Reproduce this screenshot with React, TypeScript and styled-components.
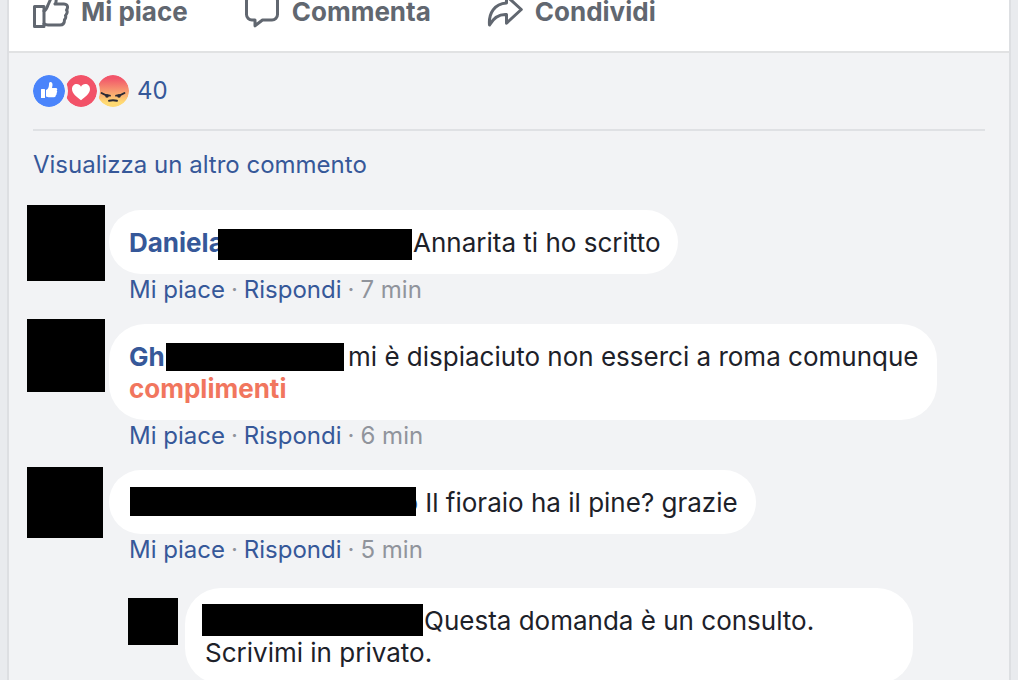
import React from "react";
import styled, { createGlobalStyle } from "styled-components";

const GlobalStyle = createGlobalStyle`
  *, *::before, *::after { box-sizing: border-box; }
  html { scrollbar-width: none; }
  body {
    margin: 0;
    background: #e9ebee;
    color: #1d2129;
    font-family: Inter, "Liberation Sans", sans-serif;
    font-size: 26px;
    line-height: 32px;
  }
`;

const Card = styled.article`
  margin: -20px 7px 0;
  border: 2px solid #dddfe2;
  border-top: 0;
  border-bottom: 0;
  background: #f2f3f5;
`;

const ActionBar = styled.div`
  display: flex;
  gap: 56px;
  padding: 16px 24px 23px;
  background: #fff;
  border-bottom: 2px solid #e1e2e3;
`;

const ActionButton = styled.button`
  display: flex;
  align-items: center;
  gap: 12px;
  height: 32px;
  padding: 0;
  border: 0;
  background: none;
  color: #616770;
  font: inherit;
  font-weight: 700;
  white-space: nowrap;
  cursor: pointer;
`;

const ActionIcon = styled.svg`
  flex: none;
  width: 36px;
  height: 36px;
  fill: none;
  stroke: #616770;
  stroke-width: 3;
  stroke-linejoin: round;
  stroke-linecap: round;
`;

const Feedback = styled.section`
  padding: 0 24px 24px;
`;

const Reactions = styled.div`
  display: flex;
  align-items: center;
  padding: 22px 0;
  border-bottom: 2px solid #dfe1e4;
`;

const Reaction = styled.svg<{ $layer: number }>`
  flex: none;
  width: 32px;
  height: 32px;
  border-radius: 50%;
  box-shadow: 0 0 0 3px #f2f3f5;
  position: relative;
  z-index: ${(p) => p.$layer};
`;

const TextLink = styled.a`
  color: #365899;
  font-size: 24px;
  text-decoration: none;
`;

const ReactionCount = styled(TextLink)`
  margin-left: 8px;
`;

const MoreRow = styled.div`
  display: flex;
  padding: 18px 0 24px;
`;

const CommentList = styled.ul`
  display: flex;
  flex-direction: column;
  gap: 13px;
  margin: 0 48px 0 -6px;
  padding: 0;
  list-style: none;
`;

const CommentItem = styled.li<{ $reply?: boolean }>`
  display: flex;
  align-items: flex-start;
  margin: ${(p) => (p.$reply ? "4px 24px 0 101px" : "0")};
`;

const AvatarColumn = styled.div<{ $reply?: boolean }>`
  flex: none;
  width: ${(p) => (p.$reply ? 57 : 82)}px;
`;

const Avatar = styled.div<{ $width: number; $height: number; $drop?: number }>`
  width: ${(p) => p.$width}px;
  height: ${(p) => p.$height}px;
  margin-top: ${(p) => p.$drop ?? 0}px;
  background: #000;
`;

const CommentBody = styled.div`
  display: flex;
  flex-direction: column;
  align-items: flex-start;
  min-width: 0;
  padding-top: 5px;
`;

const Bubble = styled.p`
  margin: 0;
  padding: 17px 18px 15px 20px;
  border-radius: 36px;
  background: #fff;
`;

const Author = styled.a<{ $width?: number; $tuck?: number }>`
  display: inline-block;
  width: ${(p) => (p.$width ? `${p.$width}px` : "auto")};
  margin-left: ${(p) => -(p.$tuck ?? 0)}px;
  color: #365899;
  font-weight: 700;
  text-decoration: none;
  white-space: nowrap;
`;

const Redaction = styled.span<{
  $width: number;
  $height: number;
  $top?: number;
  $left?: number;
  $right?: number;
}>`
  display: inline-block;
  position: relative;
  z-index: 1;
  vertical-align: top;
  width: ${(p) => p.$width}px;
  height: ${(p) => p.$height}px;
  margin: ${(p) => p.$top ?? 0}px ${(p) => p.$right ?? 0}px
    ${(p) => 32 - p.$height - (p.$top ?? 0)}px ${(p) => p.$left ?? 0}px;
  background: #000;
`;

const Highlight = styled.strong`
  color: #f1765e;
  font-weight: 700;
`;

const Meta = styled.div`
  display: flex;
  gap: 6px;
  padding-left: 20px;
  color: #90949c;
  font-size: 24px;
`;

const MetaButton = styled.button`
  padding: 0;
  border: 0;
  background: none;
  color: #365899;
  font: inherit;
  cursor: pointer;
`;

function CommentMeta({ time }: { time: string }) {
  return (
    <Meta>
      <MetaButton type="button">Mi piace</MetaButton>
      <span>·</span>
      <MetaButton type="button">Rispondi</MetaButton>
      <span>·</span>
      <time>{time}</time>
    </Meta>
  );
}

export default function App() {
  return (
    <>
      <GlobalStyle />
      <Card>
        <ActionBar>
          <ActionButton type="button">
            <ActionIcon viewBox="0 0 36 36" aria-hidden="true">
              <path d="M1.500 12.500h9.500v20h-9.500z" />
              <path d="M11 17c2-1 3-3 4-6l2.500-5.500c.8-2 1-4 3-4 3 0 3 4 2.300 7.500L22 10h9c2.500 0 3.700 1.600 3.500 3.500-.1 1-.5 1.800-1 2.500.8 1 .9 2.500 0 4-.3.700-.5 1-1 1.500.5 1.500.3 3-1 4.200C31.500 29 30 31 27 31H15c-2 0-3-.5-4-1.200" />
            </ActionIcon>
            Mi piace
          </ActionButton>
          <ActionButton type="button">
            <ActionIcon viewBox="0 0 36 36" aria-hidden="true">
              <path d="M8 1.500h20a5.500 5.500 0 0 1 5.500 5.500v13.500a5.500 5.500 0 0 1-5.500 5.500h-9.500L11 31.800V26H8a5.500 5.500 0 0 1-5.500-5.500V7A5.500 5.500 0 0 1 8 1.500z" />
            </ActionIcon>
            Commenta
          </ActionButton>
          <ActionButton type="button">
            <ActionIcon viewBox="0 0 36 36" aria-hidden="true">
              <path d="M19.500 2 34.300 15.500 19.500 29.200V20.500C12 20 7 23 2.500 31 1.500 19 7.500 9.800 19.500 9z" />
            </ActionIcon>
            Condividi
          </ActionButton>
        </ActionBar>

        <Feedback>
          <Reactions>
            <Reaction $layer={3} viewBox="0 0 32 32" aria-label="Mi piace">
              <circle cx="16" cy="16" r="16" fill="#4a84fb" />
              <rect x="8" y="14" width="4" height="9" rx=".6" fill="#fff" />
              <path
                fill="#fff"
                d="M13 15c2-.8 3-3 3-5.500C16 8 16.300 7 17.300 7c1.900 0 2.300 1.500 2.200 3.300L19 13h3.800c1.700 0 1.900 1.700.9 2.500.8.800.7 1.900-.2 2.400.5.900.2 1.800-.7 2.200.3 1.300-.6 2.200-1.800 2.200h-4.500c-1.500 0-2.500-.3-3.500-.8z"
              />
            </Reaction>
            <Reaction $layer={2} viewBox="0 0 32 32" aria-label="Love">
              <circle cx="16" cy="16" r="16" fill="#f25268" />
              <path
                fill="#fff"
                d="M16 25.200C12 22 7 18.800 7 14c0-3 2.100-5 4.700-5 1.900 0 3.400 1 4.300 2.700C16.900 10 18.400 9 20.300 9c2.600 0 4.700 2 4.700 5 0 4.800-5 8-9 11.200z"
              />
            </Reaction>
            <Reaction $layer={1} viewBox="0 0 32 32" aria-label="Grrr">
              <defs>
                <linearGradient id="angry" x1="0" y1="0" x2="0" y2="1">
                  <stop offset="0.100" stopColor="#f2556a" />
                  <stop offset="0.500" stopColor="#f79a70" />
                  <stop offset="0.850" stopColor="#ffd972" />
                </linearGradient>
              </defs>
              <circle cx="16" cy="16" r="16" fill="url(#angry)" />
              <g fill="none" stroke="#2b2a35" strokeLinecap="round" strokeWidth="1.800">
                <path d="M4.500 18c2.200 1.700 5 2.500 8.500 2.600" />
                <path d="M27.500 18c-2.200 1.700-5 2.500-8.500 2.600" />
                <path d="M12 25.700c2.500-.5 5.500-.5 8 0" strokeWidth="2" />
              </g>
              <ellipse cx="10" cy="21" rx="1.800" ry="1.700" fill="#2b2a35" />
              <ellipse cx="22" cy="21" rx="1.800" ry="1.700" fill="#2b2a35" />
            </Reaction>
            <ReactionCount href="#reazioni">40</ReactionCount>
          </Reactions>

          <MoreRow>
            <TextLink href="#commenti">Visualizza un altro commento</TextLink>
          </MoreRow>

          <CommentList>
            <CommentItem>
              <AvatarColumn>
                <Avatar $width={78} $height={76} />
              </AvatarColumn>
              <CommentBody>
                <Bubble>
                  <Author href="#daniela" $width={89}>Daniela</Author>
                  <Redaction $width={194} $height={31} $top={2} $right={1} />
                  Annarita ti ho scritto
                </Bubble>
                <CommentMeta time="7 min" />
              </CommentBody>
            </CommentItem>

            <CommentItem>
              <AvatarColumn>
                <Avatar $width={78} $height={73} />
              </AvatarColumn>
              <CommentBody>
                <Bubble>
                  <Author href="#gh" $width={37}>Gh</Author>
                  <Redaction $width={178} $height={28} $top={2} $right={4} />
                  mi è dispiaciuto non esserci a roma comunque{" "}
                  <Highlight>complimenti</Highlight>
                </Bubble>
                <CommentMeta time="6 min" />
              </CommentBody>
            </CommentItem>

            <CommentItem>
              <AvatarColumn>
                <Avatar $width={76} $height={71} $drop={2} />
              </AvatarColumn>
              <CommentBody>
                <Bubble>
                  <Redaction $width={286} $height={29} $left={1} />
                  <Author href="#autore" $tuck={14}>o</Author> Il fioraio ha il pine? grazie
                </Bubble>
                <CommentMeta time="5 min" />
              </CommentBody>
            </CommentItem>

            <CommentItem $reply>
              <AvatarColumn $reply>
                <Avatar $width={50} $height={47} $drop={15} />
              </AvatarColumn>
              <CommentBody>
                <Bubble>
                  <Redaction $width={221} $height={32} $top={-1} $left={-3} $right={1} />
                  Questa domanda è un consulto. Scrivimi in privato.
                </Bubble>
              </CommentBody>
            </CommentItem>
          </CommentList>
        </Feedback>
      </Card>
    </>
  );
}
